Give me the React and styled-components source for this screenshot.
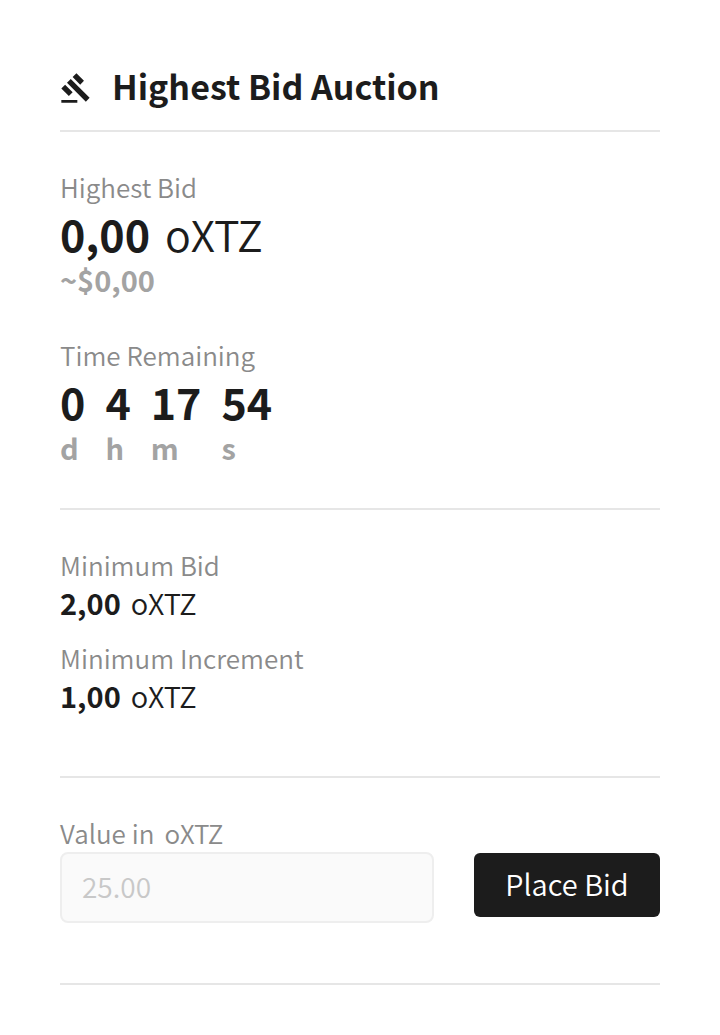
import React from "react";
import styled, { createGlobalStyle } from "styled-components";
import { MdGavel } from "react-icons/md";

const GlobalStyle = createGlobalStyle`
  *, *::before, *::after { box-sizing: border-box; }
  body {
    margin: 0;
    background: #fff;
    color: #1c1c1c;
    font-family: "Noto Sans CJK SC", "Noto Sans", sans-serif;
    font-weight: 350;
  }
`;

const Panel = styled.main`
  padding: 60px 60px 50px;
`;

const Header = styled.header`
  display: flex;
  align-items: center;
  gap: 20px;
  height: 72px;
  padding-bottom: 14px;
  border-bottom: 2px solid #e6e6e6;
  svg { flex: none; }
`;

const Title = styled.h1`
  margin: 0;
  padding-bottom: 4px;
  font-size: 34px;
  line-height: 46px;
  font-weight: 700;
`;

const Section = styled.section`
  display: flex;
  flex-direction: column;
  gap: ${(p) => p.$gap}px;
  padding: 37px 0 ${(p) => p.$bottom}px;
  border-bottom: 2px solid #e6e6e6;
`;

const Label = styled.div`
  font-size: 26px;
  line-height: 36px;
  color: #8a8a8a;
`;

const Amount = styled.div`
  display: flex;
  gap: ${(p) => (p.$large ? 15 : 10)}px;
  font-size: ${(p) => (p.$large ? 43 : 29)}px;
  line-height: ${(p) => (p.$large ? 57 : 38)}px;
`;

const Figure = styled.span`
  font-weight: 700;
`;

const Note = styled.div`
  font-size: 29px;
  line-height: 34px;
  font-weight: 700;
  color: #a3a3a3;
`;

const Countdown = styled.div`
  display: flex;
  gap: 20px;
`;

const Unit = styled.div`
  font-size: 43px;
  line-height: 57px;
  font-weight: 700;
`;

const BidForm = styled.form`
  display: flex;
  align-items: flex-end;
  gap: 40px;
`;

const Field = styled.label`
  display: flex;
  flex-direction: column;
  flex: 1;
  min-width: 0;
  gap: 1px;
`;

const FieldLabel = styled(Label)`
  display: flex;
  gap: 10px;
`;

const Input = styled.input`
  width: 100%;
  height: 71px;
  padding: 0 20px 4px;
  border: 2px solid #eee;
  border-radius: 8px;
  background: #fafafa;
  color: #1c1c1c;
  font-family: inherit;
  font-size: 28px;
  font-weight: 350;
  &::placeholder { color: #c8c8c8; opacity: 1; }
`;

const Button = styled.button`
  flex: none;
  width: 186px;
  height: 64px;
  margin-bottom: 6px;
  padding: 0 0 4px;
  border: 0;
  border-radius: 6px;
  background: #1c1c1c;
  color: #fff;
  font-family: inherit;
  font-size: 29px;
  font-weight: 350;
  cursor: pointer;
`;

const remaining = [
  ["0", "d"],
  ["4", "h"],
  ["17", "m"],
  ["54", "s"],
];

const limits = [
  ["Minimum Bid", "2,00"],
  ["Minimum Increment", "1,00"],
];

export default function App() {
  return (
    <>
      <GlobalStyle />
      <Panel>
        <Header>
          <MdGavel size={32} aria-hidden="true" />
          <Title>Highest Bid Auction</Title>
        </Header>
        <Section $gap={41} $bottom={44}>
          <div>
            <Label>Highest Bid</Label>
            <Amount $large>
              <Figure>0,00</Figure>
              <span>oXTZ</span>
            </Amount>
            <Note>~$0,00</Note>
          </div>
          <div>
            <Label>Time Remaining</Label>
            <Countdown>
              {remaining.map(([value, unit]) => (
                <div key={unit}>
                  <Unit>{value}</Unit>
                  <Note>{unit}</Note>
                </div>
              ))}
            </Countdown>
          </div>
        </Section>
        <Section $gap={19} $bottom={62}>
          {limits.map(([label, value]) => (
            <div key={label}>
              <Label>{label}</Label>
              <Amount>
                <Figure>{value}</Figure>
                <span>oXTZ</span>
              </Amount>
            </div>
          ))}
        </Section>
        <Section $gap={0} $bottom={60}>
          <BidForm onSubmit={(e) => e.preventDefault()}>
            <Field>
              <FieldLabel as="span">
                <span>Value in</span>
                <span>oXTZ</span>
              </FieldLabel>
              <Input type="text" inputMode="decimal" placeholder="25.00" />
            </Field>
            <Button type="submit">Place Bid</Button>
          </BidForm>
        </Section>
      </Panel>
    </>
  );
}
